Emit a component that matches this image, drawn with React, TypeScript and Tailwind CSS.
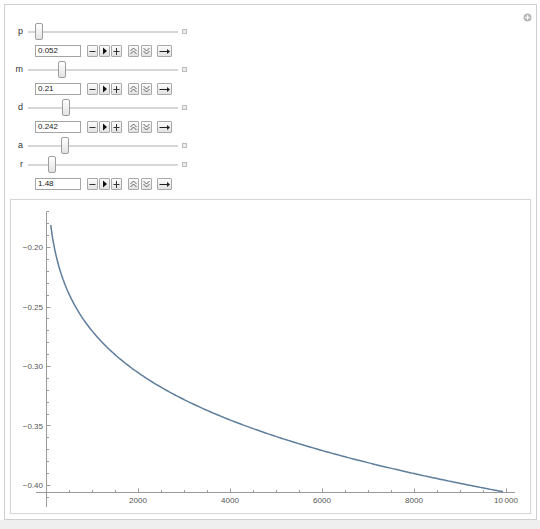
import React from "react";

const font = { fontFamily: '"Liberation Sans", Arial, sans-serif' };

const controls = [
  { name: "p", thumb: 7, value: "0.052" },
  { name: "m", thumb: 30, value: "0.21" },
  { name: "d", thumb: 34, value: "0.242" },
  { name: "a", thumb: 33, value: null },
  { name: "r", thumb: 20, value: "1.48" },
];

const Btn = ({ w = 11, children }: { w?: number; children: React.ReactNode }) => (
  <div
    className="flex h-[12px] items-center justify-center rounded-[1px] border border-[#a9a9a9] bg-gradient-to-b from-[#fcfcfc] to-[#e2e2e2]"
    style={{ width: w }}
  >
    {children}
  </div>
);

const SliderRow = ({ name, thumb }: { name: string; thumb: number }) => (
  <div className="flex h-[19px] items-center">
    <span className="w-[18px] text-right text-[9px] leading-none text-[#333]">{name}</span>
    <div className="relative ml-[5px] h-full w-[150px]">
      <div className="absolute left-0 right-0 top-[9px] h-[2px] bg-[#d6d6d6]" />
      <div
        className="absolute top-[1px] h-[17px] w-[8px] rounded-[2px] border border-[#9d9d9d] bg-gradient-to-b from-[#ffffff] to-[#e3e3e3]"
        style={{ left: thumb }}
      />
    </div>
    <div className="ml-[4px] h-[5px] w-[5px] border border-[#bdbdbd] bg-[#ececec]" />
  </div>
);

const InputRow = ({ value }: { value: string }) => (
  <div className="flex h-[19px] items-center pl-[30px]">
    <div className="h-[12px] w-[46px] border border-[#a4a4a4] bg-white pl-[2px] text-[8px] leading-[10px] text-[#222]">
      {value}
    </div>
    <div className="ml-[6px] flex gap-[1px]">
      <Btn>
        <svg width="9" height="10" viewBox="0 0 9 10">
          <line x1="1.5" y1="5.5" x2="7.5" y2="5.5" stroke="#333" strokeWidth="1" />
        </svg>
      </Btn>
      <Btn>
        <svg width="9" height="10" viewBox="0 0 9 10">
          <polygon points="3,1.5 3,8.5 7,5" fill="#111" />
        </svg>
      </Btn>
      <Btn>
        <svg width="9" height="10" viewBox="0 0 9 10">
          <line x1="1.5" y1="5.5" x2="7.5" y2="5.5" stroke="#333" strokeWidth="1" />
          <line x1="4.5" y1="2" x2="4.5" y2="9" stroke="#333" strokeWidth="1" />
        </svg>
      </Btn>
    </div>
    <div className="ml-[6px] flex gap-[2px]">
      <Btn>
        <svg width="9" height="10" viewBox="0 0 9 10" fill="none" stroke="#555" strokeWidth="0.9">
          <polyline points="1.5,5 4.5,2 7.5,5" />
          <polyline points="1.5,8 4.5,5 7.5,8" />
        </svg>
      </Btn>
      <Btn>
        <svg width="9" height="10" viewBox="0 0 9 10" fill="none" stroke="#555" strokeWidth="0.9">
          <polyline points="1.5,2 4.5,5 7.5,2" />
          <polyline points="1.5,5 4.5,8 7.5,5" />
        </svg>
      </Btn>
    </div>
    <div className="ml-[5px]">
      <Btn w={15}>
        <svg width="13" height="10" viewBox="0 0 13 10">
          <line x1="1.5" y1="5.5" x2="10" y2="5.5" stroke="#222" strokeWidth="1" />
          <polygon points="9,3 12,5.5 9,8" fill="#222" />
        </svg>
      </Btn>
    </div>
  </div>
);

// chart in page coordinates
const x0 = 46.5;
const axisY = 492.5;
const yOf = (v: number) => 247 + ((-0.2 - v) / 0.05) * 59.5;

const curve = Array.from({ length: 220 }, (_, i) => {
  const u = 4.7 + (i / 219) * (457 - 4.7);
  const py = 16.5 + 157.8 * Math.pow(u, 0.18);
  return `${(46 + u).toFixed(2)},${py.toFixed(2)}`;
}).join(" ");

const Plot = () => {
  const yMinor = Array.from({ length: 25 }, (_, i) => -0.17 - i * 0.01);
  const yMajor = [-0.2, -0.25, -0.3, -0.35, -0.4];
  const xMinor = Array.from({ length: 20 }, (_, i) => (i + 1) * 500);
  return (
    <svg width="519" height="313" viewBox="11 200 519 313" style={font}>
      <line x1={x0} y1="212" x2={x0} y2="507" stroke="#9a9a9a" strokeWidth="1" />
      <line x1="36" y1={axisY} x2="515" y2={axisY} stroke="#9a9a9a" strokeWidth="1" />
      {yMinor.map((v) => {
        const major = yMajor.some((m) => Math.abs(m - v) < 1e-6);
        const y = Math.round(yOf(v)) + 0.5;
        return (
          <line key={v} x1={x0} y1={y} x2={x0 + (major ? 4 : 2.5)} y2={y} stroke="#9a9a9a" strokeWidth="1" />
        );
      })}
      {yMajor.map((v) => (
        <text key={v} x="43" y={yOf(v) + 3} fontSize="8" textAnchor="end" fill="#555">
          {"\u2212" + Math.abs(v).toFixed(2)}
        </text>
      ))}
      {xMinor.map((t) => {
        const major = t % 2000 === 0;
        const x = Math.round(46 + t * 0.046) + 0.5;
        return (
          <line key={t} x1={x} y1={axisY} x2={x} y2={axisY - (major ? 4 : 2.5)} stroke="#9a9a9a" strokeWidth="1" />
        );
      })}
      {[2000, 4000, 6000, 8000, 10000].map((t) => (
        <text key={t} x={46 + t * 0.046} y="503" fontSize="8" textAnchor="middle" fill="#555">
          {t === 10000 ? "10\u2009000" : t}
        </text>
      ))}
      <polyline points={curve} fill="none" stroke="#5f7e9c" strokeWidth="1.5" strokeLinejoin="round" />
    </svg>
  );
};

export default function App() {
  return (
    <div className="flex h-[529px] w-[540px] flex-col bg-white" style={font}>
      <div className="pl-[4px] pt-[4px]">
        <div className="relative h-[516px] w-[533px] border border-[#cfcfcf] bg-white">
          <svg className="absolute right-[4px] top-[8px]" width="9" height="9" viewBox="0 0 9 9">
            <circle cx="4.5" cy="4.5" r="4" fill="#b9b9b9" />
            <line x1="2.3" y1="4.5" x2="6.7" y2="4.5" stroke="#fff" strokeWidth="1.2" />
            <line x1="4.5" y1="2.3" x2="4.5" y2="6.7" stroke="#fff" strokeWidth="1.2" />
          </svg>
          <div className="pt-[17px]">
            {controls.map((c) => (
              <React.Fragment key={c.name}>
                <SliderRow name={c.name} thumb={c.thumb} />
                {c.value && <InputRow value={c.value} />}
              </React.Fragment>
            ))}
          </div>
          <div className="ml-[5px] mt-[6px] h-[315px] w-[521px] border border-[#d6d6d6] bg-white shadow-[0_0_2px_rgba(0,0,0,0.06)]">
            <Plot />
          </div>
        </div>
      </div>
      <div className="flex-1 bg-[#efefef]" />
    </div>
  );
}
